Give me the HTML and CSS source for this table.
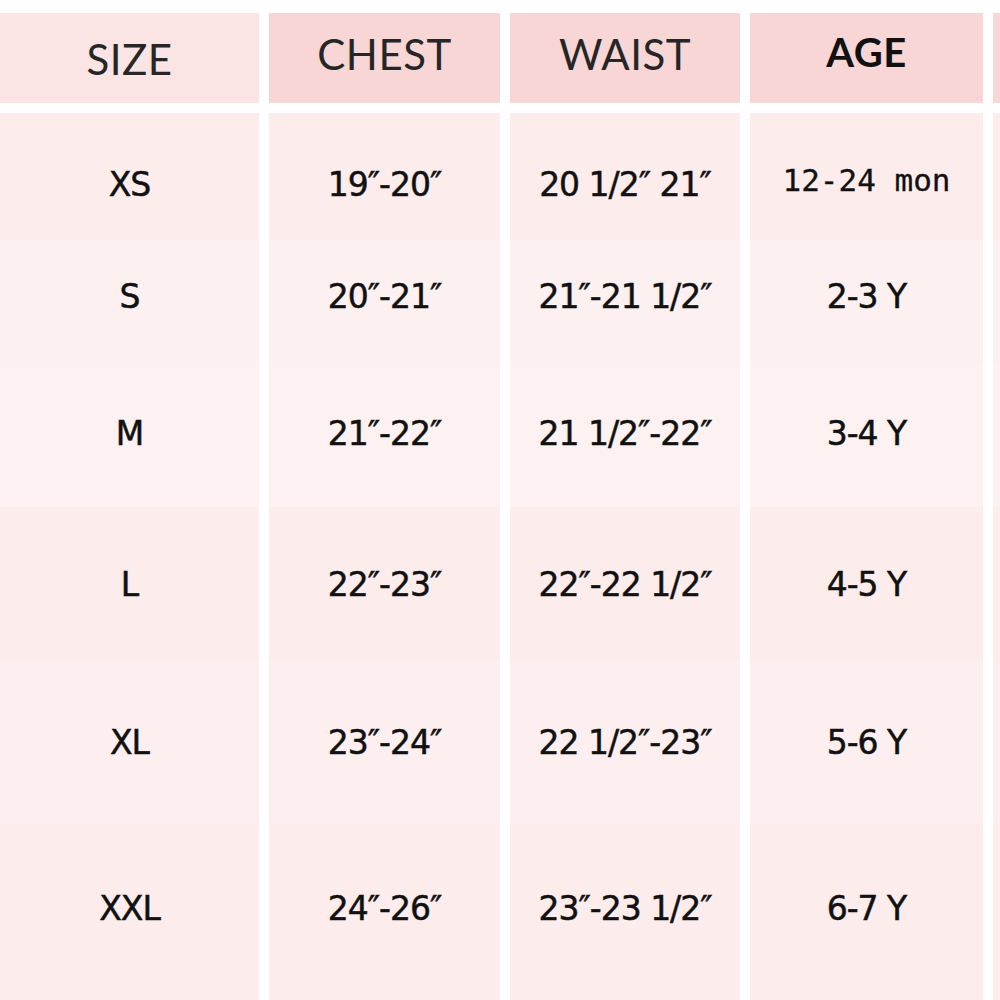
FILE: index.html
```html
<!DOCTYPE html>
<html lang="en">
<head>
<meta charset="utf-8">
<title>Size Chart</title>
<link rel="stylesheet" href="styles.css">
</head>
<body>
<div class="chart">
  <div class="head h1">SIZE</div>
  <div class="head">CHEST</div>
  <div class="head">WAIST</div>
  <div class="head bold">AGE</div>
  <div class="head"></div>

  <div class="body-col c1">
    <div class="cell r1">XS</div>
    <div class="cell r2">S</div>
    <div class="cell r3">M</div>
    <div class="cell r4">L</div>
    <div class="cell r5">XL</div>
    <div class="cell r6">XXL</div>
  </div>
  <div class="body-col">
    <div class="cell r1">19″-20″</div>
    <div class="cell r2">20″-21″</div>
    <div class="cell r3">21″-22″</div>
    <div class="cell r4">22″-23″</div>
    <div class="cell r5">23″-24″</div>
    <div class="cell r6">24″-26″</div>
  </div>
  <div class="body-col">
    <div class="cell r1">20 1/2″ 21″</div>
    <div class="cell r2">21″-21 1/2″</div>
    <div class="cell r3">21 1/2″-22″</div>
    <div class="cell r4">22″-22 1/2″</div>
    <div class="cell r5">22 1/2″-23″</div>
    <div class="cell r6">23″-23 1/2″</div>
  </div>
  <div class="body-col">
    <div class="cell r1 mono">12-24 mon</div>
    <div class="cell r2">2-3 Y</div>
    <div class="cell r3">3-4 Y</div>
    <div class="cell r4">4-5 Y</div>
    <div class="cell r5">5-6 Y</div>
    <div class="cell r6">6-7 Y</div>
  </div>
  <div class="body-col">
    <div class="cell r1"></div>
    <div class="cell r2"></div>
    <div class="cell r3"></div>
    <div class="cell r4"></div>
    <div class="cell r5"></div>
    <div class="cell r6"></div>
  </div>
</div>
</body>
</html>
```

FILE: styles.css
```css
html, body {
  margin: 0;
  padding: 0;
  background: #ffffff;
}

body {
  width: 1000px;
  height: 1000px;
  overflow: hidden;
}

.chart {
  display: grid;
  grid-template-columns: 259px 231px 230px 233px 1fr;
  grid-template-rows: 90px 887px;
  column-gap: 10px;
  row-gap: 10px;
  padding-top: 13px;
}

.head {
  background: #f9d6d6;
  display: flex;
  align-items: center;
  justify-content: center;
  font-family: "Lato", "Liberation Sans", sans-serif;
  font-size: 42px;
  color: #262626;
  letter-spacing: 0.5px;
  padding-bottom: 8px;
  box-sizing: border-box;
}

.head.h1 {
  background: #fbe4e4;
  padding-bottom: 0;
  padding-top: 2px;
}

.head.bold {
  font-weight: 700;
  font-size: 40px;
  color: #111;
  padding-bottom: 12px;
}

.body-col {
  display: flex;
  flex-direction: column;
}

.cell {
  display: flex;
  align-items: center;
  justify-content: center;
  font-family: "DejaVu Sans", sans-serif;
  font-size: 33px;
  letter-spacing: -1px;
  color: #111;
  -webkit-text-stroke: 0.5px #111;
  box-sizing: border-box;
}

.r1 { height: 127px; background: #fcecec; padding-top: 16px; }
.r2 { height: 123px; background: #fdf0f0; padding-bottom: 10px; }
.r3 { height: 144px; background: #fdf1f1; padding-bottom: 4px; }
.r4 { height: 154px; background: #fcecec; }
.r5 { height: 162px; background: #fdefef; }
.r6 { height: 177px; background: #fcecec; padding-bottom: 6px; }

.mono {
  font-family: "DejaVu Sans Mono", monospace;
  font-size: 31px;
  letter-spacing: 0;
  -webkit-text-stroke: 0.3px #111;
  padding-top: 6px;
}
```
